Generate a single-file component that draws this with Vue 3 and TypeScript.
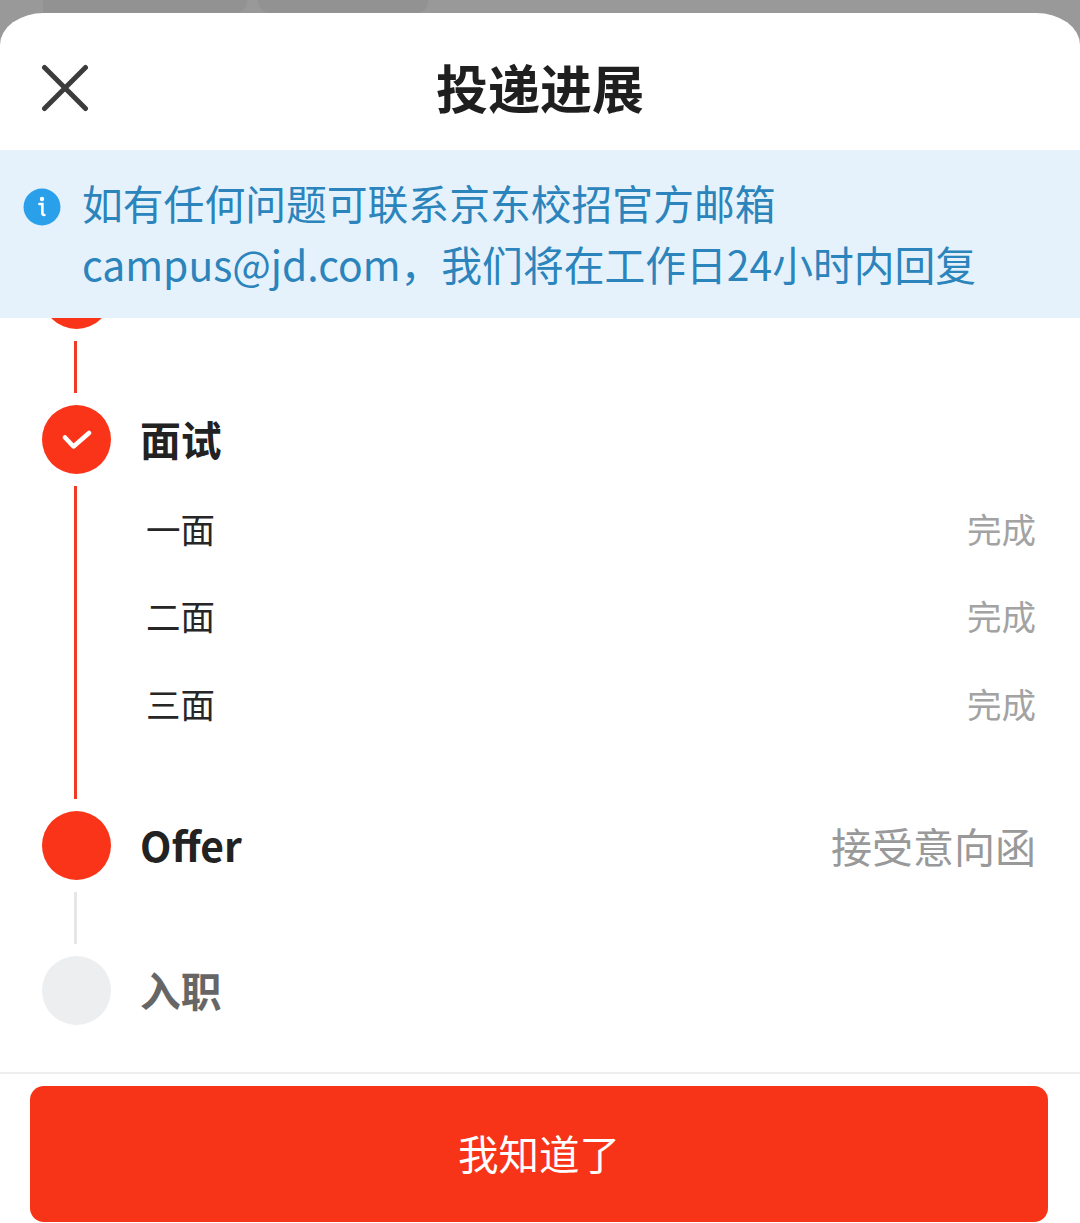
<script setup lang="ts">
interface SubItem {
  name: string
  status: string
}

interface Step {
  name: string
  status?: string
  state: 'done' | 'current' | 'todo'
  check?: boolean
  lineOn?: boolean
  children?: SubItem[]
}

const steps: Step[] = [
  { name: '', state: 'done', lineOn: true },
  {
    name: '面试',
    state: 'done',
    check: true,
    lineOn: true,
    children: [
      { name: '一面', status: '完成' },
      { name: '二面', status: '完成' },
      { name: '三面', status: '完成' },
    ],
  },
  { name: 'Offer', status: '接受意向函', state: 'current' },
  { name: '入职', state: 'todo' },
]
</script>

<template>
  <div class="page">
    <div class="backdrop">
      <div class="shade shade-a"></div>
      <div class="shade shade-b"></div>
    </div>

    <div class="sheet">
      <header class="header">
        <button class="close" type="button" aria-label="关闭">
          <svg width="48" height="48" viewBox="0 0 48 48">
            <path d="M3.5 3.5 L44.5 44.5 M44.5 3.5 L3.5 44.5" stroke="#3c3c3c" stroke-width="5" stroke-linecap="round" fill="none" />
          </svg>
        </button>
        <h1 class="title">投递进展</h1>
      </header>

      <div class="notice">
        <svg class="notice-icon" width="38" height="38" viewBox="0 0 38 38">
          <circle cx="19" cy="19" r="18.5" fill="#2a9fea" />
          <circle cx="19" cy="11" r="2.2" fill="#fff" />
          <path d="M16.4 16 H19.4 V25 Q19.4 27 21.4 27" stroke="#fff" stroke-width="2.6" fill="none" stroke-linecap="round" />
        </svg>
        <p class="notice-text">如有任何问题可联系京东校招官方邮箱<br />campus@jd.com，我们将在工作日24小时内回复</p>
      </div>

      <div class="timeline">
        <div
          v-for="(step, index) in steps"
          :key="index"
          class="step"
          :class="{ 'has-children': step.children }"
        >
          <div class="rail">
            <div class="dot" :class="step.state === 'todo' ? 'dot-off' : 'dot-on'">
              <svg v-if="step.check" width="30" height="24" viewBox="0 0 30 24">
                <path d="M3 9.5 L11.5 18.5 L27 5" stroke="#fff" stroke-width="4.5" fill="none" stroke-linecap="round" stroke-linejoin="round" />
              </svg>
            </div>
            <div
              v-if="index < steps.length - 1"
              class="line"
              :class="step.lineOn || step.state === 'done' ? 'line-on' : 'line-off'"
            ></div>
          </div>
          <div class="body">
            <div class="step-head">
              <span class="step-name" :class="{ muted: step.state === 'todo' }">{{ step.name }}</span>
              <span v-if="step.status" class="step-status">{{ step.status }}</span>
            </div>
            <div v-for="child in step.children" :key="child.name" class="sub-row">
              <span class="sub-name">{{ child.name }}</span>
              <span class="sub-status">{{ child.status }}</span>
            </div>
          </div>
        </div>
      </div>

      <footer class="footer">
        <button class="confirm" type="button">我知道了</button>
      </footer>
    </div>
  </div>
</template>

<style>
html,
body {
  margin: 0;
  background: #9a9a9a;
}
</style>

<style scoped>
.page {
  position: relative;
  width: 1080px;
  height: 1223px;
  overflow: hidden;
  background: #999999;
  font-family: "Noto Sans CJK SC", "Noto Sans", sans-serif;
}

.backdrop {
  position: absolute;
  top: 0;
  left: 0;
}

.shade {
  position: absolute;
  top: 0;
  height: 13px;
  background: #929292;
}

.shade-a {
  left: 43px;
  width: 204px;
  border-bottom-right-radius: 12px;
}

.shade-b {
  left: 258px;
  width: 170px;
  border-bottom-left-radius: 12px;
  border-bottom-right-radius: 12px;
}

.sheet {
  position: absolute;
  top: 13px;
  left: 0;
  right: 0;
  bottom: 0;
  display: flex;
  flex-direction: column;
  background: #fff;
  border-radius: 44px 44px 0 0 / 32px 32px 0 0;
  overflow: hidden;
}

.header {
  position: relative;
  flex: none;
  height: 137px;
  display: flex;
  align-items: center;
  justify-content: center;
}

.close {
  position: absolute;
  left: 41px;
  top: 51px;
  width: 48px;
  height: 48px;
  padding: 0;
  border: none;
  background: none;
}

.close svg {
  display: block;
}

.title {
  margin: 0 0 -11px;
  font-size: 52px;
  font-weight: 700;
  line-height: 70px;
  color: #1f1f1f;
}

.notice {
  flex: none;
  position: relative;
  z-index: 1;
  height: 168px;
  display: flex;
  align-items: center;
  gap: 22px;
  padding-left: 23px;
  background: #e6f2fb;
  box-sizing: border-box;
}

.notice-icon {
  flex: none;
  margin-top: -54px;
}

.notice-text {
  margin: -2px 0 0 -1px;
  font-size: 40.8px;
  line-height: 61px;
  color: #2b84bc;
  white-space: nowrap;
}

.timeline {
  flex: 1;
  min-height: 0;
  overflow: hidden;
  padding: 0 44px 0 42px;
}

.step {
  display: flex;
  gap: 29px;
  height: 145px;
}

.step:first-child {
  margin-top: -58px;
}

.step.has-children {
  height: 406px;
}

.step:last-child {
  height: 70px;
}

.rail {
  flex: none;
  width: 69px;
  display: flex;
  flex-direction: column;
  align-items: center;
}

.dot {
  flex: none;
  width: 69px;
  height: 69px;
  border-radius: 50%;
  display: flex;
  align-items: center;
  justify-content: center;
}

.dot-on {
  background: #f93418;
}

.dot-off {
  background: #eceef0;
}

.line {
  flex: 1;
  width: 3px;
  margin: 12px 2px 12px 0;
}

.line-on {
  background: #f03a25;
}

.line-off {
  background: #e6e6e6;
}

.body {
  flex: 1;
  min-width: 0;
}

.step-head {
  height: 69px;
  display: flex;
  align-items: center;
  justify-content: space-between;
  margin-top: -1px;
  margin-bottom: 1px;
}

.step-name {
  font-size: 40.8px;
  font-weight: 700;
  color: #222;
}

.step-name.muted {
  color: #666;
}

.step-status {
  font-size: 41px;
  color: #999;
}

.has-children .step-head {
  margin-bottom: 11px;
}

.sub-row {
  height: 87.5px;
  display: flex;
  align-items: center;
  justify-content: space-between;
  padding-left: 6px;
}

.sub-name {
  font-size: 34.5px;
  color: #262626;
}

.sub-status {
  font-size: 34.5px;
  color: #a3a3a3;
}

.footer {
  flex: none;
  height: 151px;
  padding: 12px 32px 0 30px;
  border-top: 2px solid #eeeeee;
  box-sizing: border-box;
}

.confirm {
  display: block;
  width: 100%;
  height: 136px;
  padding: 0 0 3px;
  border: none;
  border-radius: 14px;
  background: #f83418;
  color: #fff;
  font-family: inherit;
  font-size: 40.5px;
}
</style>
